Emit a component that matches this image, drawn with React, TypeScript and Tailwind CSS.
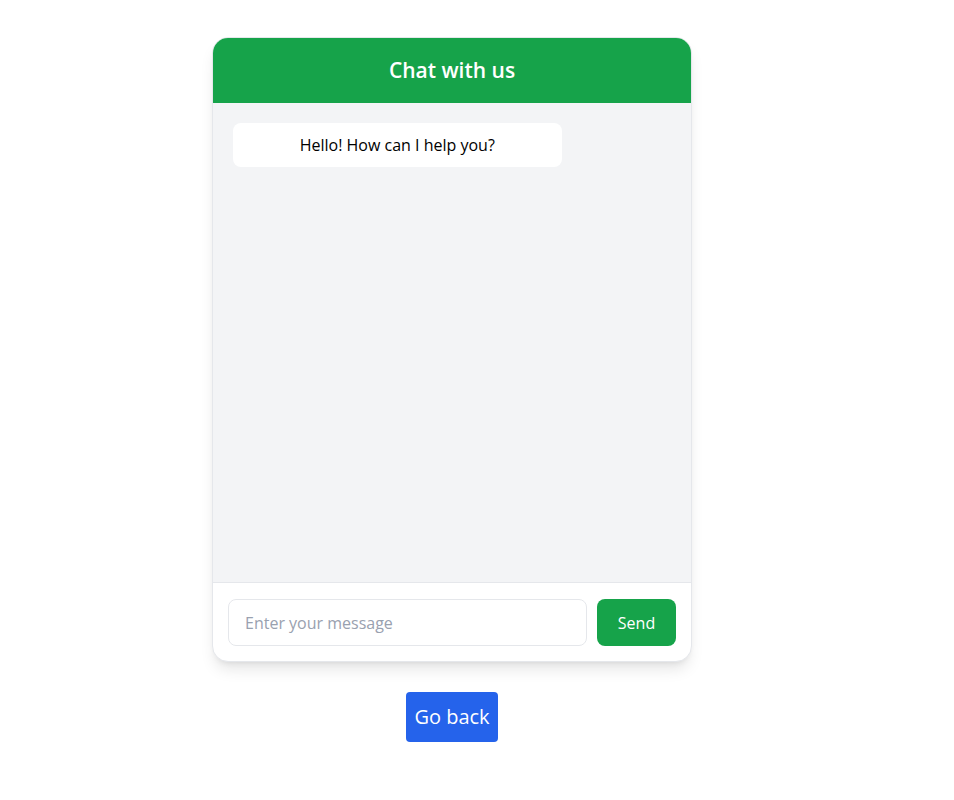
export default function App() {
  return (
    <div
      className="min-h-screen bg-white flex flex-col items-center pt-[37px] pr-[50px]"
      style={{ fontFamily: '"Open Sans", "Noto Sans", sans-serif' }}
    >
      <div className="w-[480px] h-[625px] flex flex-col rounded-2xl border border-gray-200 shadow-lg overflow-hidden bg-white">
        <div className="h-[65px] shrink-0 bg-[#16a34a] flex items-center justify-center">
          <h1 className="text-white text-[21px] font-semibold">Chat with us</h1>
        </div>
        <div className="flex-1 bg-[#f3f4f6] p-5">
          <div className="max-w-[75%] bg-white rounded-lg py-2.5 px-4 text-center text-black text-base leading-6">
            Hello! How can I help you?
          </div>
        </div>
        <div className="border-t border-gray-200 px-[15px] pt-4 pb-[15px] flex gap-2.5">
          <input
            type="text"
            placeholder="Enter your message"
            className="flex-1 h-[47px] rounded-lg border border-gray-200 px-4 text-base outline-none placeholder:text-gray-400"
          />
          <button className="h-[47px] w-[79px] rounded-lg bg-[#16a34a] text-white text-base">
            Send
          </button>
        </div>
      </div>
      <button className="mt-[30px] w-[92px] h-[50px] rounded bg-[#2563eb] text-white text-xl">
        Go back
      </button>
    </div>
  );
}
